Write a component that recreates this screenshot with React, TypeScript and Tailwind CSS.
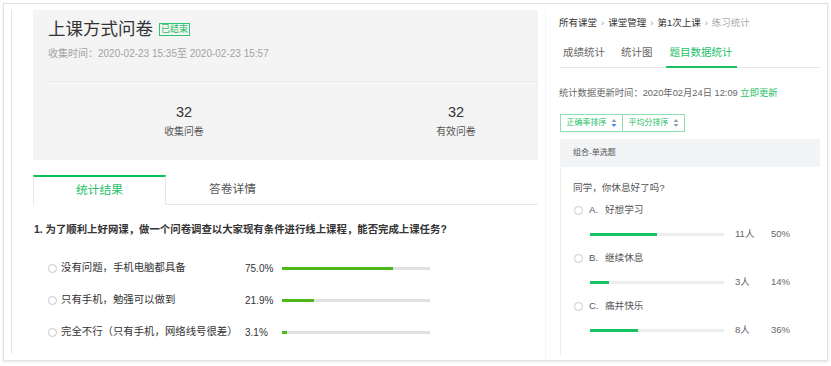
import React from 'react';

const options = [
  { label: '没有问题，手机电脑都具备', pct: 75.0 },
  { label: '只有手机，勉强可以做到', pct: 21.9 },
  { label: '完全不行（只有手机，网络线号很差）', pct: 3.1 },
];

const answers = [
  { key: 'A', text: '好想学习', count: 11, pct: 50 },
  { key: 'B', text: '继续休息', count: 3, pct: 14 },
  { key: 'C', text: '痛并快乐', count: 8, pct: 36 },
];

const SortIcon = ({ active }: { active?: boolean }) => (
  <svg width="6" height="10" viewBox="0 0 6 10" className="ml-[4px]">
    <path d="M0.5 4 L3 1 L5.5 4 Z" fill="#9aa0a6" />
    <path d="M0.5 6 L3 9 L5.5 6 Z" fill={active ? '#3b8cf0' : '#9aa0a6'} />
  </svg>
);

const Radio = () => <span className="box-border block h-[9px] w-[9px] shrink-0 rounded-full border border-[#c9c9c9] bg-white" />;

const LeftPanel = () => (
  <div className="ml-[7px] mt-[6px] h-[344px] w-[527px] shrink-0 border-l border-[#e6e6e6] pl-[21px]">
    <div className="h-[150px] overflow-hidden bg-[#f4f4f4]">
      <div className="pl-[15px] pt-[7px]">
        <div className="flex items-center">
          <span className="text-[17.5px] leading-[24px] text-[#333]">上课方式问卷</span>
          <span className="ml-[6px] box-border flex h-[13px] items-center border border-[#2cc772] px-[1px] text-[9px] leading-[11px] text-[#1fbf63]">
            已结束
          </span>
        </div>
        <p className="mt-[6px] text-[10px] leading-[14px] text-[#a3a3a3]">收集时间：2020-02-23 15:35至 2020-02-23 15:57</p>
      </div>
      <div className="ml-[15px] mt-[20px] grid w-[600px] grid-cols-[272px_272px] border-t border-[#e9e9e9] pt-[21px]">
        {[
          ['32', '收集问卷'],
          ['32', '有效问卷'],
        ].map(([n, label]) => (
          <div key={label} className="flex flex-col items-center">
            <span className="text-[14.5px] leading-[18px] text-[#333]">{n}</span>
            <span className="mt-[4px] text-[9.9px] leading-[14px] text-[#555]">{label}</span>
          </div>
        ))}
      </div>
    </div>

    <div className="mt-[15px] flex h-[30px]">
      <div className="flex w-[133px] items-center justify-center border-x border-t-2 border-x-[#e6e6e6] border-t-[#0bc15c] text-[11.8px] text-[#1fc16a]">
        统计结果
      </div>
      <div className="flex flex-1 border-b border-[#e6e6e6]">
        <div className="flex w-[133px] items-center justify-center text-[11.8px] text-[#555]">答卷详情</div>
      </div>
    </div>

    <p className="mt-[17px] pl-[1px] text-[10.4px] font-bold leading-[16px] text-[#333]">
      1. 为了顺利上好网课，做一个问卷调查以大家现有条件进行线上课程，能否完成上课任务?
    </p>

    <div className="mt-[21px] flex flex-col gap-[14px]">
      {options.map((o) => (
        <div key={o.label} className="flex h-[18px] items-center pl-[15px]">
          <Radio />
          <span className="ml-[4px] w-[184px] text-[10.4px] text-[#333]">{o.label}</span>
          <span className="w-[37px] text-[10px] text-[#333]">{o.pct.toFixed(1)}%</span>
          <div className="h-[3px] w-[148px] bg-[#e2e2e2]">
            <div className="h-full bg-[#4cb81a]" style={{ width: `${o.pct}%` }} />
          </div>
        </div>
      ))}
    </div>
  </div>
);

const RightPanel = () => (
  <div className="ml-[7px] mt-[6px] flex-1 border-l border-[#f5f5f5] pr-[7px]">
    <div className="flex items-center pl-[13px] pt-[6px] text-[9.5px] leading-[14px] text-[#333]">
      <span>所有课堂</span>
      <span className="mx-[4px] text-[#999]">›</span>
      <span>课堂管理</span>
      <span className="mx-[4px] text-[#999]">›</span>
      <span>第1次上课</span>
      <span className="mx-[4px] text-[#999]">›</span>
      <span className="text-[#aaa]">练习统计</span>
    </div>

    <div className="ml-[14px] mt-[8px] flex border-b border-[#e8e8e8] text-[10.5px] leading-[14px]">
      <span className="ml-[3px] pb-[8px] pt-[7px] text-[#666]">成绩统计</span>
      <span className="ml-[16px] pb-[8px] pt-[7px] text-[#666]">统计图</span>
      <span className="-mb-px ml-[13px] border-b-2 border-[#1cc163] px-[4px] pb-[7px] pt-[7px] text-[#1fc16a]">题目数据统计</span>
    </div>

    <p className="ml-[13px] mt-[18px] text-[9.3px] leading-[14px] text-[#666]">
      统计数据更新时间：2020年02月24日 12:09 <span className="text-[#1fc16a]">立即更新</span>
    </p>

    <div className="ml-[14px] mt-[14px] flex h-[18px] w-[125px] border border-[#8ee0b0] text-[8px] text-[#1fbf63]">
      <div className="flex w-[62px] items-center justify-center border-r border-[#8ee0b0]">
        正确率排序
        <SortIcon active />
      </div>
      <div className="flex flex-1 items-center justify-center">
        平均分排序
        <SortIcon />
      </div>
    </div>

    <div className="ml-[14px] mt-[7px] h-[216px]">
      <div className="flex h-[28px] items-center bg-[#f2f4f5] pl-[13px] text-[8px] text-[#555]">组合-单选题</div>
      <div className="h-[188px] border-l border-[#ececec] pl-[12px] pt-[14px]">
        <p className="text-[9.6px] leading-[14px] text-[#555]">同学，你休息好了吗?</p>
        <div className="mt-[8px] flex flex-col gap-[10px]">
          {answers.map((a) => (
            <div key={a.key} className="flex flex-col gap-[10px]">
              <div className="flex h-[14px] items-center pl-[1px] text-[9.6px] text-[#555]">
                <Radio />
                <span className="ml-[6px] w-[16px]">{a.key}.</span>
                <span>{a.text}</span>
              </div>
              <div className="flex h-[14px] items-center pl-[17px] text-[9.5px] text-[#666]">
                <div className="h-[3px] w-[134px] bg-[#eeeeee]">
                  <div className="h-full bg-[#12c35f]" style={{ width: `${a.pct}%` }} />
                </div>
                <span className="ml-[11px] w-[36px]">{a.count}人</span>
                <span>{a.pct}%</span>
              </div>
            </div>
          ))}
        </div>
      </div>
    </div>
  </div>
);

export default function App() {
  return (
    <div
      className="h-[366px] w-[831px] overflow-hidden bg-white pl-[3px] pt-[3px]"
      style={{ fontFamily: '"Liberation Sans", "Noto Sans CJK SC", sans-serif' }}
    >
      <div className="flex h-[358px] w-[825px] overflow-hidden border border-[#e2e2e2] bg-white shadow-[0_1px_3px_rgba(0,0,0,0.1)]">
        <LeftPanel />
        <RightPanel />
      </div>
    </div>
  );
}
